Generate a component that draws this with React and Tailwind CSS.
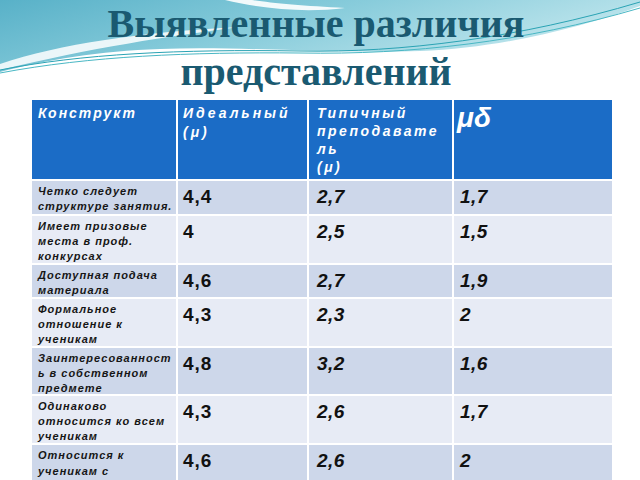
const ROWS = [
  { lines: ['Четко следует', 'структуре занятия.'], v: ['4,4', '2,7', '1,7'] },
  { lines: ['Имеет призовые', 'места в проф.', 'конкурсах'], v: ['4', '2,5', '1,5'] },
  { lines: ['Доступная подача', 'материала'], v: ['4,6', '2,7', '1,9'] },
  { lines: ['Формальное', 'отношение к', 'ученикам'], v: ['4,3', '2,3', '2'] },
  { lines: ['Заинтересованност', 'ь в собственном', 'предмете'], v: ['4,8', '3,2', '1,6'] },
  { lines: ['Одинаково', 'относится ко всем', 'ученикам'], v: ['4,3', '2,6', '1,7'] },
  { lines: ['Относится к', 'ученикам с', 'пониманием'], v: ['4,6', '2,6', '2'] },
];

const sans = { fontFamily: '"Liberation Sans", Arial, sans-serif' };

function Backdrop() {
  // декоративная волна сверху слайда
  return (
    <svg className="absolute inset-0" width="640" height="480" viewBox="0 0 640 480">
      <defs>
        <linearGradient id="sky" x1="0" y1="0" x2="1" y2="0.4">
          <stop offset="0" stopColor="#58b1c8" />
          <stop offset="0.5" stopColor="#88ccdb" />
          <stop offset="1" stopColor="#c2e7ee" />
        </linearGradient>
      </defs>
      <path d="M0 0H640V6C580 28 500 48 420 51C330 54 240 46 160 49C100 51 45 60 0 72Z" fill="url(#sky)" />
      <path d="M0 64C60 44 140 32 240 27C170 36 90 48 0 70Z" fill="#ffffff" opacity="0.85" />
      <path d="M0 70C80 54 180 49 300 51C400 53 520 38 640 2" stroke="#2aa3b4" strokeWidth="1" fill="none" />
      <path d="M0 73C90 56 190 52 300 53C410 55 525 42 640 8" stroke="#49b7c4" strokeWidth="1" fill="none" />
      <path d="M225 0C262 9 305 13 345 8C305 6 270 3 252 0Z" fill="#ffffff" opacity="0.9" />
    </svg>
  );
}

export default function App() {
  return (
    <div className="relative w-[640px] h-[480px] overflow-hidden bg-white">
      <Backdrop />
      <div className="relative">
        <h1
          className="w-[632px] text-center font-bold text-[40px] leading-[48px] text-[#1a5a71]"
          style={{ fontFamily: '"Liberation Serif", "Times New Roman", serif' }}
        >
          Выявленные различия
          <br />
          представлений
        </h1>

        <div
          className="ml-[32px] mt-[4px] grid grid-cols-[144px_129px_143px_158px] grid-rows-[79px_33px_47px_32px_47px_46px_47px_47px] gap-[2px] italic font-bold"
          style={sans}
        >
          {/* Header */}
          <div className="bg-[#1b6cc6] text-white pl-[6px] pt-[4px] text-[14px] leading-[18px] tracking-[2px]">Конструкт</div>
          <div className="bg-[#1b6cc6] text-white pl-[5px] pt-[4px] text-[14px] leading-[19px] tracking-[3px]">
            Идеальный<br />(μ)
          </div>
          <div className="bg-[#1b6cc6] text-white pl-[8px] pt-[4px] text-[14px] leading-[18px] tracking-[2.5px]">
            Типичный<br />преподавате<br />ль<br />(μ)
          </div>
          <div className="bg-[#1b6cc6] text-white pl-[3px] pt-[2px] text-[28px] leading-[32px]">μδ</div>

          {ROWS.map((r, i) => {
            const bg = i % 2 === 0 ? 'bg-[#cdd7ea]' : 'bg-[#e7ebf5]';
            const last = i === ROWS.length - 1;
            return [
              <div key={`l${i}`} className={`${bg} pl-[6px] ${last ? 'pt-[2px] leading-[16px]' : 'pt-[3px] leading-[15px]'} text-[11px] tracking-[1px] text-[#161616] overflow-hidden`}>
                {r.lines.map(l => (
                  <div key={l} className="whitespace-nowrap">{l}</div>
                ))}
              </div>,
              <div key={`a${i}`} className={`${bg} pl-[5px] pt-[5px] text-[19px] leading-[22px] tracking-[1px] not-italic text-[#111]`}>{r.v[0]}</div>,
              <div key={`b${i}`} className={`${bg} pl-[8px] pt-[5px] text-[19px] leading-[22px] tracking-[0.5px] text-[#111]`}>{r.v[1]}</div>,
              <div key={`c${i}`} className={`${bg} pl-[6px] pt-[5px] text-[19px] leading-[22px] tracking-[0.5px] text-[#111]`}>{r.v[2]}</div>,
            ];
          })}
        </div>
      </div>
    </div>
  );
}
